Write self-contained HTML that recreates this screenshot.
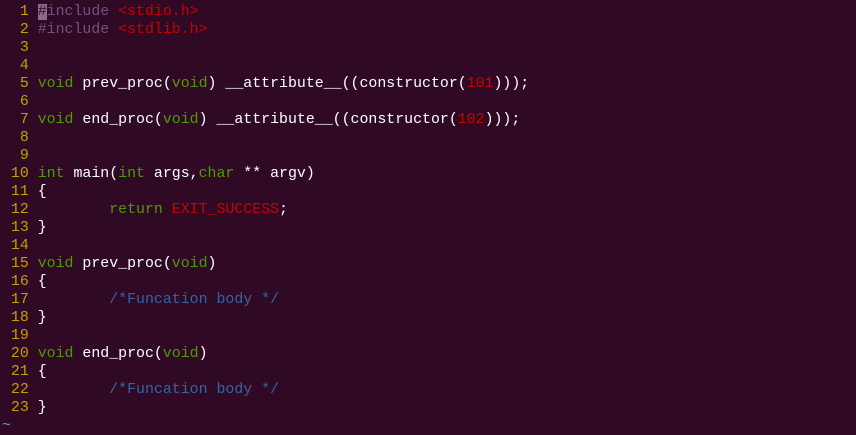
<!DOCTYPE html>
<html><head><style>
body{margin:0;background:#300a24;width:856px;height:432px;overflow:hidden}
pre{margin:0;padding:3px 0 0 2px;font-family:"Liberation Mono",monospace;font-size:14.9px;line-height:18px;color:#ffffff}
.n{color:#c4a000}.g{color:#4e9a06}.r{color:#cc0000}.p{color:#75507b}.b{color:#3465a4}
.c{background:#8f6a8f;color:#300a24}.t{color:#6a8fcf}
</style></head><body><pre><span class="n">  1 </span><span class="p"><span class="c">#</span>include</span> <span class="r">&lt;stdio.h&gt;</span>
<span class="n">  2 </span><span class="p">#include</span> <span class="r">&lt;stdlib.h&gt;</span>
<span class="n">  3 </span>
<span class="n">  4 </span>
<span class="n">  5 </span><span class="g">void</span> prev_proc(<span class="g">void</span>) __attribute__((constructor(<span class="r">101</span>)));
<span class="n">  6 </span>
<span class="n">  7 </span><span class="g">void</span> end_proc(<span class="g">void</span>) __attribute__((constructor(<span class="r">102</span>)));
<span class="n">  8 </span>
<span class="n">  9 </span>
<span class="n"> 10 </span><span class="g">int</span> main(<span class="g">int</span> args,<span class="g">char</span> ** argv)
<span class="n"> 11 </span>{
<span class="n"> 12 </span>        <span class="g">return</span> <span class="r">EXIT_SUCCESS</span>;
<span class="n"> 13 </span>}
<span class="n"> 14 </span>
<span class="n"> 15 </span><span class="g">void</span> prev_proc(<span class="g">void</span>)
<span class="n"> 16 </span>{
<span class="n"> 17 </span>        <span class="b">/*Funcation body */</span>
<span class="n"> 18 </span>}
<span class="n"> 19 </span>
<span class="n"> 20 </span><span class="g">void</span> end_proc(<span class="g">void</span>)
<span class="n"> 21 </span>{
<span class="n"> 22 </span>        <span class="b">/*Funcation body */</span>
<span class="n"> 23 </span>}
<span class="t">~</span></pre></body></html>
